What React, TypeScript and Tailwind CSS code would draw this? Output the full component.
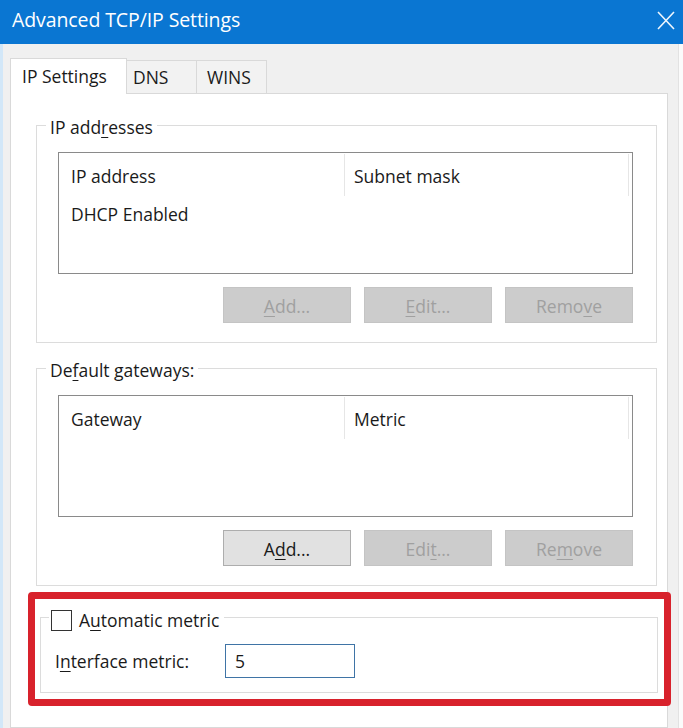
import React from "react";

const font = { fontFamily: '"Open Sans", "Noto Sans", Arial, sans-serif' };

function U({ children }: { children: React.ReactNode }) {
  return <span className="underline decoration-1 underline-offset-[3px]">{children}</span>;
}

function Btn({ children, enabled }: { children: React.ReactNode; enabled?: boolean }) {
  return (
    <div
      className={
        "w-[128px] h-[36px] flex items-center justify-center border text-[17.5px] pt-[2px] " +
        (enabled
          ? "bg-[#e1e1e1] border-[#adadad] text-[#1a1a1a]"
          : "bg-[#cccccc] border-[#c4c4c4] text-[#a0a0a0]")
      }
    >
      {children}
    </div>
  );
}

function ListView({ c1, c2, row }: { c1: string; c2: string; row?: string }) {
  return (
    <div className="ml-[21px] mr-[23px] mt-[14px] h-[122px] border border-[#8a8a8a] bg-white">
      <div className="flex h-[44px]">
        <div className="w-[286px] pl-[12px] pt-[3px] flex items-center border-r border-[#e6e6e6] my-[1px]">{c1}</div>
        <div className="w-[284px] pl-[9px] pt-[3px] flex items-center border-r border-[#e6e6e6] my-[1px]">{c2}</div>
      </div>
      {row && <div className="h-[32px] pl-[12px] pt-[2px] flex items-center">{row}</div>}
    </div>
  );
}

export default function App() {
  return (
    <div
      className="relative w-[683px] h-[728px] overflow-hidden bg-[#f0f0f0] flex flex-col text-[17.5px] text-[#1a1a1a]"
      style={font}
    >
      {/* Title bar */}
      <div className="h-[44px] shrink-0 bg-[#0a76d2] flex items-center justify-between pl-[12px] pr-[8px]">
        <span className="text-white text-[19.5px] pb-[5px] tracking-[-0.1px]">Advanced TCP/IP Settings</span>
        <svg width="18" height="19" viewBox="0 0 18 19" className="mb-[4px]">
          <path d="M1 1 L17 18 M17 1 L1 18" stroke="#eef6fd" strokeWidth="1.6" fill="none" />
        </svg>
      </div>

      <div className="flex flex-1 min-h-0">
        <div className="w-[3px] bg-[#d2e7f8]" />
        <div className="w-[665px] pl-[7px] flex flex-col">
          {/* Tabs */}
          <div className="flex items-end h-[36px] mt-[14px] shrink-0">
            <div className="relative z-10 w-[117px] h-[36px] bg-white border border-b-0 border-[#d9d9d9] pl-[11px] flex items-center pb-[1px]">
              IP Settings
            </div>
            <div className="w-[70px] h-[34px] bg-[#f2f2f2] border-t border-r border-[#d9d9d9] pl-[6px] flex items-center">
              DNS
            </div>
            <div className="w-[70px] h-[34px] bg-[#f2f2f2] border-t border-r border-[#d9d9d9] pl-[10px] flex items-center">
              WINS
            </div>
          </div>

          {/* Panel */}
          <div className="-mt-[1px] w-[658px] flex-1 bg-white border border-[#d9d9d9] flex flex-col">
            {/* IP addresses */}
            <div className="ml-[25px] mr-[10px] mt-[31px] h-[218px] border border-[#dcdcdc] flex flex-col">
              <div className="-mt-[12px] ml-[9px] px-[4px] bg-white w-fit h-[24px] leading-[24px] pt-[1px]">
                IP add<U>r</U>esses
              </div>
              <ListView c1="IP address" c2="Subnet mask" row="DHCP Enabled" />
              <div className="flex justify-end gap-[13px] pr-[23px] mt-[13px]">
                <Btn>
                  <U>A</U>dd...
                </Btn>
                <Btn>
                  <U>E</U>dit...
                </Btn>
                <Btn>
                  Remo<U>v</U>e
                </Btn>
              </div>
            </div>

            {/* Default gateways */}
            <div className="ml-[25px] mr-[10px] mt-[25px] h-[218px] border border-[#dcdcdc] flex flex-col">
              <div className="-mt-[12px] ml-[9px] px-[4px] bg-white w-fit h-[24px] leading-[24px] pt-[1px]">
                De<U>f</U>ault gateways:
              </div>
              <ListView c1="Gateway" c2="Metric" />
              <div className="flex justify-end gap-[13px] pr-[23px] mt-[13px]">
                <Btn enabled>
                  A<U>d</U>d...
                </Btn>
                <Btn>
                  Edi<U>t</U>...
                </Btn>
                <Btn>
                  Re<U>m</U>ove
                </Btn>
              </div>
            </div>

            {/* Automatic metric */}
            <div className="ml-[29px] mr-[9px] mt-[31px] h-[76px] border border-[#dcdcdc] flex flex-col">
              <div className="-mt-[10px] ml-[8px] px-[2px] pr-[5px] bg-white w-fit h-[24px] flex items-center gap-[7px]">
                <div className="w-[21px] h-[21px] border border-[#333333] bg-white" />
                <span>
                  A<U>u</U>tomatic metric
                </span>
              </div>
              <div className="flex items-center mt-[12px] pl-[14px]">
                <span className="w-[170px]">
                  I<U>n</U>terface metric:
                </span>
                <div className="w-[130px] h-[34px] border border-[#3f74a6] pl-[9px] flex items-center">5</div>
              </div>
            </div>
          </div>
        </div>
        <div className="w-[10px]" />
        <div className="w-[1px] bg-[#e2e2e2]" />
        <div className="flex-1 bg-[#fbfbfb]" />
      </div>

      {/* Red annotation box */}
      <div className="absolute left-[28px] top-[592px] w-[643px] h-[114px] border-[7px] border-[#d8222c] rounded-[4px] pointer-events-none" />
    </div>
  );
}
